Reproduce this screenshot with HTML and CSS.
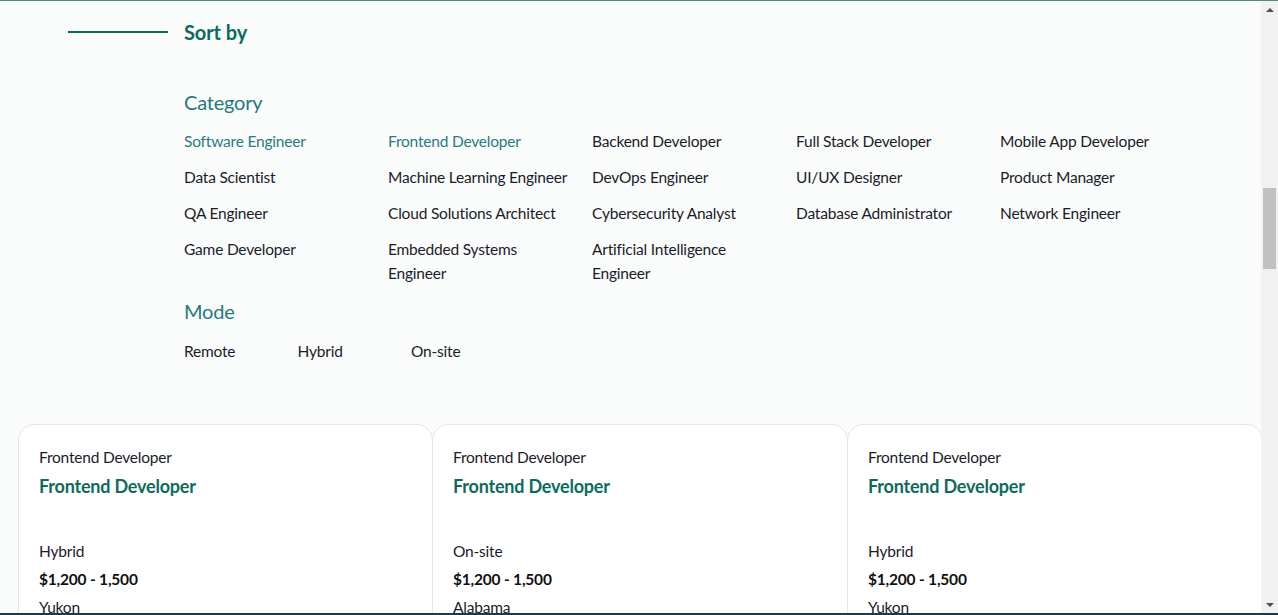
FILE: index.html
```html
<!DOCTYPE html>
<html lang="en">
<head>
<meta charset="utf-8">
<title>Jobs</title>
<link rel="stylesheet" href="styles.css">
</head>
<body>
<main class="page">
  <section class="filters">
    <div class="sort-head">
      <span class="sort-line"></span>
      <h2 class="sort-title">Sort by</h2>
    </div>

    <div class="filter-body">
      <h3 class="group-title">Category</h3>
      <ul class="cat-grid">
        <li class="opt active">Software Engineer</li>
        <li class="opt active">Frontend Developer</li>
        <li class="opt">Backend Developer</li>
        <li class="opt">Full Stack Developer</li>
        <li class="opt">Mobile App Developer</li>
        <li class="opt">Data Scientist</li>
        <li class="opt">Machine Learning Engineer</li>
        <li class="opt">DevOps Engineer</li>
        <li class="opt">UI/UX Designer</li>
        <li class="opt">Product Manager</li>
        <li class="opt">QA Engineer</li>
        <li class="opt">Cloud Solutions Architect</li>
        <li class="opt">Cybersecurity Analyst</li>
        <li class="opt">Database Administrator</li>
        <li class="opt">Network Engineer</li>
        <li class="opt">Game Developer</li>
        <li class="opt">Embedded Systems Engineer</li>
        <li class="opt">Artificial Intelligence Engineer</li>
      </ul>

      <h3 class="group-title mode-title">Mode</h3>
      <ul class="mode-grid">
        <li class="opt">Remote</li>
        <li class="opt">Hybrid</li>
        <li class="opt">On-site</li>
      </ul>
    </div>
  </section>

  <section class="listings">
    <div class="cards">
      <article class="card">
        <p class="card-cat">Frontend Developer</p>
        <h4 class="card-title">Frontend Developer</h4>
        <p class="card-line">Hybrid</p>
        <p class="card-line card-pay">$1,200 - 1,500</p>
        <p class="card-line">Yukon</p>
      </article>
      <article class="card">
        <p class="card-cat">Frontend Developer</p>
        <h4 class="card-title">Frontend Developer</h4>
        <p class="card-line">On-site</p>
        <p class="card-line card-pay">$1,200 - 1,500</p>
        <p class="card-line">Alabama</p>
      </article>
      <article class="card">
        <p class="card-cat">Frontend Developer</p>
        <h4 class="card-title">Frontend Developer</h4>
        <p class="card-line">Hybrid</p>
        <p class="card-line card-pay">$1,200 - 1,500</p>
        <p class="card-line">Yukon</p>
      </article>
    </div>
  </section>
</main>

<div class="scrollbar" aria-hidden="true">
  <span class="sb-arrow sb-up"></span>
  <div class="sb-track"><span class="sb-thumb"></span></div>
  <span class="sb-arrow sb-down"></span>
</div>
</body>
</html>
```
FILE: styles.css
```css
* { box-sizing: border-box; }

html {
  height: 100%;
  overflow: hidden;
  border-top: 1px solid #4f8c83;
  border-bottom: 2px solid #1d3a4a;
  background: #fafcfb;
}

body {
  margin: 0;
  height: 100%;
  overflow: hidden;
  font-family: "Lato", "Liberation Sans", sans-serif;
  font-size: 15.5px;
  letter-spacing: -0.2px;
  color: #1b1b2a;
  background: #fafcfb;
}

.page {
  width: 1261px;
}

.filters {
  padding-top: 17px;
}

.sort-head {
  display: flex;
  align-items: center;
  gap: 16px;
  padding-left: 68px;
  height: 28px;
}

.sort-line {
  width: 100px;
  height: 2px;
  background: #086a58;
}

.sort-title {
  margin: 0;
  font-size: 20px;
  line-height: 28px;
  font-weight: 700;
  color: #0d6b5c;
  letter-spacing: -0.1px;
}

.filter-body {
  padding-left: 184px;
  padding-top: 42px;
}

.group-title {
  margin: 0 0 13px;
  font-size: 20px;
  line-height: 28px;
  font-weight: 400;
  color: #1f7a7c;
  letter-spacing: -0.2px;
}

.mode-title {
  margin: 12px 0 14px;
}

.cat-grid,
.mode-grid {
  list-style: none;
  margin: 0;
  padding: 0;
  display: grid;
  row-gap: 12px;
}

.cat-grid {
  grid-template-columns: repeat(5, 204px);
}

.mode-grid {
  grid-template-columns: repeat(3, 113.5px);
}

.opt {
  line-height: 24px;
  color: #1b1b2a;
  padding-right: 16px;
}

.opt.active {
  color: #2a7a80;
}

.listings {
  padding: 61px 0 0 18px;
}

.cards {
  display: grid;
  grid-template-columns: repeat(3, 415px);
}

.card {
  background: #ffffff;
  border: 1px solid #e3e6ea;
  border-radius: 16px;
  padding: 20px 20px 24px;
  min-height: 250px;
}

.card + .card {
  margin-left: -1px;
}

.card p,
.card h4 {
  margin: 0;
}

.card-cat {
  line-height: 24px;
}

.card-title {
  margin-top: 3px !important;
  margin-bottom: 37px !important;
  font-size: 18px;
  line-height: 28px;
  font-weight: 700;
  color: #0d6b5c;
}

.card-line {
  line-height: 28px;
}

.card-pay {
  font-weight: 700;
  color: #111111;
}

/* window scrollbar drawn over the page edge */
.scrollbar {
  position: fixed;
  top: 1px;
  bottom: 2px;
  right: 0;
  width: 17px;
  background: #f1f1f1;
  display: flex;
  flex-direction: column;
}

.sb-arrow {
  height: 17px;
  display: flex;
  align-items: center;
  justify-content: center;
}

.sb-arrow::before {
  content: "";
  width: 0;
  height: 0;
  border-left: 4px solid transparent;
  border-right: 4px solid transparent;
}

.sb-up::before {
  border-bottom: 4px solid #505050;
}

.sb-down::before {
  border-top: 4px solid #505050;
}

.sb-track {
  flex: 1;
  padding: 170px 2px 0;
}

.sb-thumb {
  display: block;
  height: 81px;
  background: #c1c1c1;
}
```
